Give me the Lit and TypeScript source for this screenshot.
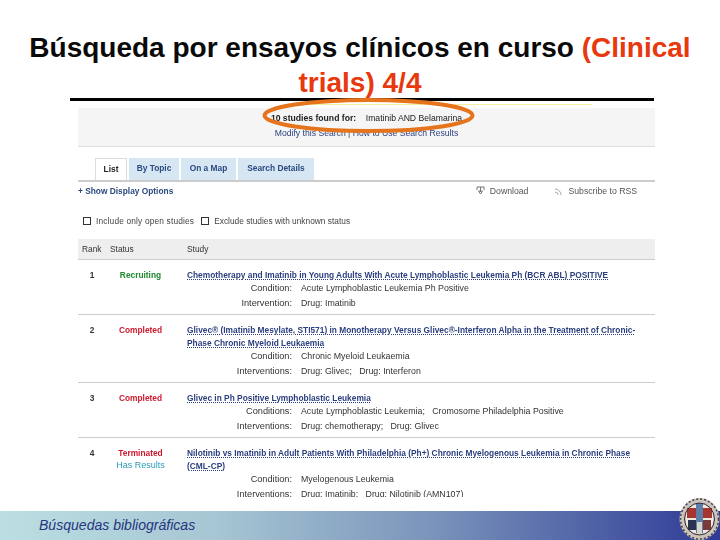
import { LitElement, html, css } from "lit";
import { customElement } from "lit/decorators.js";

type Row = { rank: string; status: string; cls: string; extra?: string; title: string; meta: [string, string][]; h: number };
const rows: Row[] = [
  { rank: "1", status: "Recruiting", cls: "rec", title: "Chemotherapy and Imatinib in Young Adults With Acute Lymphoblastic Leukemia Ph (BCR ABL) POSITIVE",
    meta: [["Condition:", "Acute Lymphoblastic Leukemia Ph Positive"], ["Intervention:", "Drug: Imatinib"]], h: 55 },
  { rank: "2", status: "Completed", cls: "comp", title: "Glivec® (Imatinib Mesylate, STI571) in Monotherapy Versus Glivec®-Interferon Alpha in the Treatment of Chronic-Phase Chronic Myeloid Leukaemia",
    meta: [["Condition:", "Chronic Myeloid Leukaemia"], ["Interventions:", "Drug: Glivec;   Drug: Interferon"]], h: 68 },
  { rank: "3", status: "Completed", cls: "comp", title: "Glivec in Ph Positive Lymphoblastic Leukemia",
    meta: [["Conditions:", "Acute Lymphoblastic Leukemia;   Cromosome Philadelphia Positive"], ["Interventions:", "Drug: chemotherapy;   Drug: Glivec"]], h: 55 },
  { rank: "4", status: "Terminated", cls: "comp", extra: "Has Results", title: "Nilotinib vs Imatinib in Adult Patients With Philadelphia (Ph+) Chronic Myelogenous Leukemia in Chronic Phase (CML-CP)",
    meta: [["Condition:", "Myelogenous Leukemia"], ["Interventions:", "Drug: Imatinib;   Drug: Nilotinib (AMN107)"]], h: 70 },
];

@customElement("app-root")
export class AppRoot extends LitElement {
  static styles = css`
    :host { display: block; width: 720px; height: 540px; position: relative; overflow: hidden; background: #fff; font-family: "Liberation Sans", Arial, sans-serif; }
    .slide { display: flex; flex-direction: column; height: 540px; }
    h1 { margin: 0; height: 98px; padding: 30px 24px 0; box-sizing: border-box; text-align: center; font-size: 28px; line-height: 35px; font-weight: 700; color: #0a0a0a; flex: none; }
    h1 span { color: #e8380d; }
    h1 div { white-space: nowrap; }
    .rule { margin: 0 66px 0 70px; height: 3px; background: #000; flex: none; }
    .yellow { margin: 3px 128px 0 290px; height: 1px; background: #f6ef9a; flex: none; }
    .shot { flex: none; margin: 0 65px 0 78px; overflow: hidden; filter: blur(0.45px); height: 392px; font-size: 8.35px; color: #222; }
    .found { height: 39px; margin-top: 3px; background: #f5f5f5; border-bottom: 1px solid #ddd; box-sizing: border-box; display: flex; flex-direction: column; align-items: center; padding-top: 5px; gap: 5px; line-height: 10px; font-size: 8.65px; }
    .found b { font-weight: 700; }
    .found .mod { color: #2b3f7e; }
    .tabs { display: flex; gap: 2px; height: 22px; margin-top: 11px; padding-left: 17px; border-bottom: 2px solid #ccc; }
    .tab { height: 22px; line-height: 21px; box-sizing: border-box; background: #d6e6f2; color: #2b4a80; text-align: center; font-weight: 700; }
    .tab.on { background: #fff; color: #222; border: 1px solid #ddd; border-bottom: none; }
    .opts { display: flex; justify-content: space-between; height: 10px; line-height: 10px; margin-top: 4px; }
    .show { color: #2b4a80; font-weight: 700; }
    .dl { display: flex; gap: 26px; color: #555; padding-right: 18px; font-size: 8.7px; }
    .dl span { display: flex; align-items: center; gap: 5px; }
    .dl svg { flex: none; }
    .checks { display: flex; align-items: center; margin-top: 20px; height: 10px; padding-left: 5px; color: #444; gap: 3px; }
    .box { width: 6px; height: 6px; border: 1px solid #333; background: #fff; margin-right: 2px; }
    .open { letter-spacing: 0.16px; }
    .checks .sp { width: 1px; }
    .hd { display: grid; grid-template-columns: 28px 77px 1fr; margin-top: 13px; height: 21px; line-height: 21px; background: #eee; border-bottom: 1px solid #ccc; box-sizing: border-box; color: #333; padding-left: 4px; }
    .row { display: grid; grid-template-columns: 32px 77px 1fr; border-bottom: 1px solid #ccc; box-sizing: border-box; padding: 8.5px 0 0 0; line-height: 13px; }
    .row.last { border-bottom: none; }
    .rk { text-align: center; font-weight: 700; padding-right: 4px; color: #333; }
    .st { text-align: center; font-weight: 700; padding-right: 16px; }
    .st div.extra { font-weight: 400; color: #2a9ab8; font-size: 9px; margin-top: -1px; }
    .rec { color: #1f8a2e; }
    .comp { color: #cc1a2e; }
    .title { color: #2b3f7e; font-weight: 700; text-decoration: underline dotted #2b3f7e; text-underline-offset: 1px; line-height: 13px; width: 456px; }
    .meta { display: grid; grid-template-columns: 105px 1fr; column-gap: 9px; line-height: 14.5px; color: #333; margin-top: -0.5px; }
    .meta .l { text-align: right; font-size: 9.2px; }
    .meta .v { white-space: pre; font-size: 8.8px; }
    .foot { position: relative; margin-top: auto; height: 29px; flex: none; background: linear-gradient(90deg, #bbdfe2 0%, #a6c6d3 30%, #7a94bb 60%, #2e3a96 100%); padding-left: 39px; font-style: italic; font-size: 14.05px; line-height: 29px; color: #27357f; }
    .oval { position: absolute; left: 260px; top: 96px; pointer-events: none; }
    .seal { position: absolute; left: 679px; top: 498px; }
  `;
  render() {
    return html`<div class="slide">
      <h1><div>Búsqueda por ensayos clínicos en curso <span>(Clinical</span></div><div><span>trials) 4/4</span></div></h1>
      <div class="rule"></div>
      <div class="yellow"></div>
      <div class="shot">
        <div class="found">
          <div class="q"><b>10 studies found for:</b> &nbsp;&nbsp; Imatinib AND Belamarina</div>
          <div class="mod">Modify this Search | How to Use Search Results</div>
        </div>
        <div class="tabs">
          <div class="tab on" style="width:32px">List</div>
          <div class="tab" style="width:50px">By Topic</div>
          <div class="tab" style="width:55px">On a Map</div>
          <div class="tab" style="width:76px">Search Details</div>
        </div>
        <div class="opts">
          <div class="show">+ Show Display Options</div>
          <div class="dl">
            <span><svg width="9" height="11" viewBox="0 0 9 11"><path d="M1 1h7M1 1v3M8 1v3M4.5 1v5M2.5 5l2 3 2-3z" stroke="#777" fill="none"/></svg>Download</span>
            <span><svg width="9" height="9" viewBox="0 0 9 9"><path d="M1 2a6 6 0 0 1 6 6M1 5a3 3 0 0 1 3 3" stroke="#aaa" fill="none"/></svg>Subscribe to RSS</span>
          </div>
        </div>
        <div class="checks"><span class="box"></span><span class="open">Include only open studies</span><span class="sp"></span><span class="box"></span>Exclude studies with unknown status</div>
        <div class="hd"><span>Rank</span><span>Status</span><span>Study</span></div>
        ${rows.map((r, i) => html`<div class="row ${i === rows.length - 1 ? "last" : ""}" style="height:${r.h}px">
          <div class="rk">${r.rank}</div>
          <div class="st"><div class=${r.cls}>${r.status}</div>${r.extra ? html`<div class="extra">${r.extra}</div>` : ""}</div>
          <div>
            <div class="title">${r.title}</div>
            <div class="meta">${r.meta.map(([l, v]) => html`<div class="l">${l}</div><div class="v">${v}</div>`)}</div>
          </div>
        </div>`)}
      </div>
      <div class="foot">Búsquedas bibliográficas</div>
    </div>
    <svg class="oval" width="220" height="40" viewBox="0 0 220 40"><ellipse cx="108.5" cy="19.5" rx="104" ry="15.5" fill="none" stroke="#e5741d" stroke-width="4"/></svg>
    <svg class="seal" width="41" height="42" viewBox="0 0 41 42">
      <ellipse cx="20.5" cy="21" rx="20" ry="21" fill="#c9c4bc"/>
      <ellipse cx="20.5" cy="21" rx="19" ry="20" fill="none" stroke="#4a3a4a" stroke-width="1.5" stroke-dasharray="2 2"/>
      <ellipse cx="20.5" cy="21" rx="14" ry="15" fill="#efe9df"/>
      <path d="M8 10h25v10H8z" fill="#a5352e"/>
      <path d="M17 5h7v30h-7z" fill="#5c7ea8"/>
      <path d="M9 22h8v10H9z" fill="#2b3350"/>
      <path d="M24 22h8v10h-8z" fill="#7a3a3a"/>
      <path d="M18 24h5v12h-5z" fill="#d8d4c8"/>
      <ellipse cx="20.5" cy="21" rx="15" ry="16" fill="none" stroke="#3a2a3a" stroke-width="1"/>
    </svg>`;
  }
}
